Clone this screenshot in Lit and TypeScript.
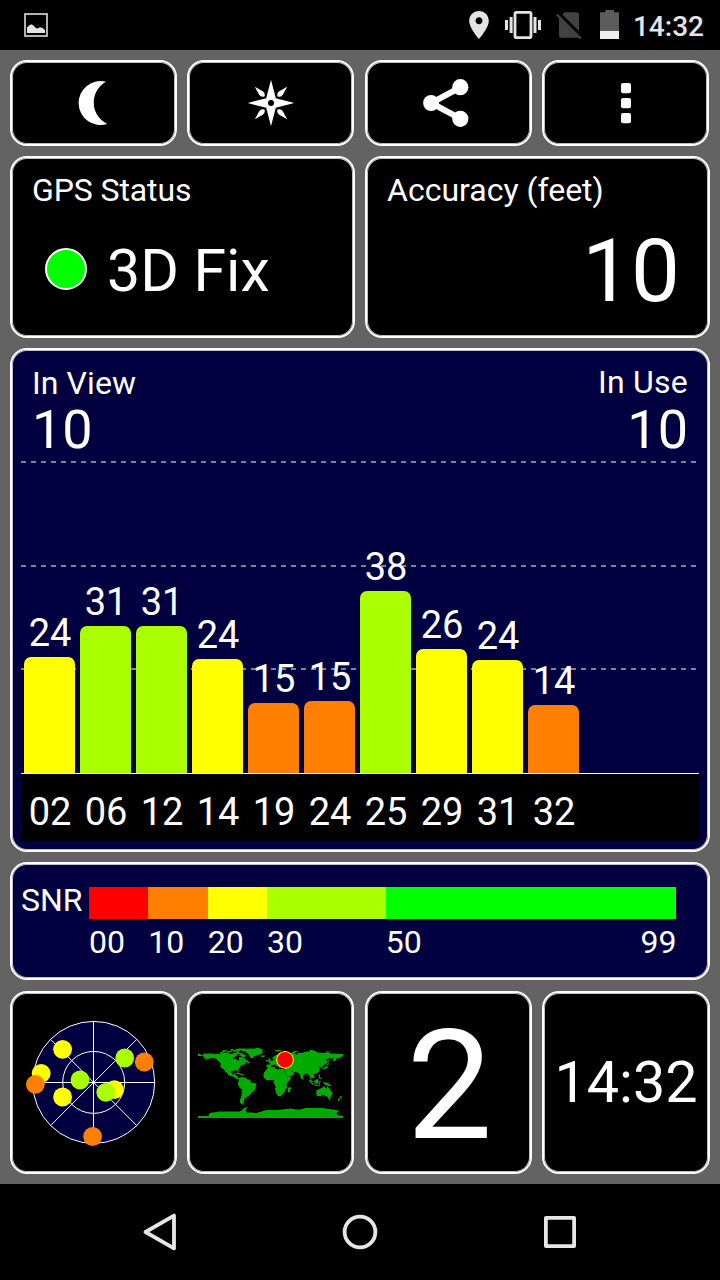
import { LitElement, html, svg, css } from "lit";
import { customElement, property } from "lit/decorators.js";

interface Satellite {
  prn: string;
  snr: number;
  height: number;
  level: string;
}

const satellites: Satellite[] = [
  { prn: "02", snr: 24, height: 116, level: "yellow" },
  { prn: "06", snr: 31, height: 147, level: "lime" },
  { prn: "12", snr: 31, height: 147, level: "lime" },
  { prn: "14", snr: 24, height: 114, level: "yellow" },
  { prn: "19", snr: 15, height: 70, level: "orange" },
  { prn: "24", snr: 15, height: 72, level: "orange" },
  { prn: "25", snr: 38, height: 182, level: "lime" },
  { prn: "29", snr: 26, height: 124, level: "yellow" },
  { prn: "31", snr: 24, height: 113, level: "yellow" },
  { prn: "32", snr: 14, height: 68, level: "orange" },
];

@customElement("status-bar")
class StatusBar extends LitElement {
  static styles = css`
    :host {
      display: flex;
      align-items: center;
      justify-content: space-between;
      height: 50px;
      background: #000;
      color: #e4e4e4;
    }
    svg { display: block; }
    .right { display: flex; align-items: center; padding-right: 16px; }
    .clock { font-size: 28px; line-height: 28px; font-weight: 500; margin-left: 13px; padding-top: 3px; }
    .left { padding-left: 24px; }
  `;
  render() {
    return html`
      <div class="left">
        <svg width="24" height="24" viewBox="0 0 24 24">
          <rect x="1" y="1" width="22" height="22" fill="none" stroke="#c4c6c4" stroke-width="1.8" />
          <path d="M3 20V14.5L5 12.5L7.5 11.3L10 13L12 15.3L14 15.3L16 14.2L18.5 15L21 17V20Z" fill="#e4e4e4" />
        </svg>
      </div>
      <div class="right">
        <svg width="154" height="50" viewBox="466 0 154 50">
          <path transform="translate(462.2 8.2) scale(1.4)" fill="#e4e4e4"
            d="M12 2C8.13 2 5 5.13 5 9c0 5.25 7 13 7 13s7-7.75 7-13c0-3.87-3.13-7-7-7zm0 9.5c-1.38 0-2.5-1.12-2.5-2.5s1.12-2.5 2.5-2.5 2.5 1.12 2.5 2.5-1.12 2.5-2.5 2.5z" />
          <rect x="515" y="12.4" width="16" height="25.2" rx="1.4" fill="none" stroke="#e4e4e4" stroke-width="2.8" />
          <path fill="#e4e4e4" d="M505 20h3v10h-3zM509.6 17h3v16h-3zM533.5 17h3v16h-3zM538 20h3v10h-3z" />
          <path fill="#424242" d="M564.5 12.3H576.5Q579 12.3 579 14.8V31L562.3 14.5ZM559 18.3L578 37.3Q577.5 37.8 576.5 37.8H561.5Q559 37.8 559 35.3Z" />
          <path d="M556.8 14.6L580.8 38.6" stroke="#424242" stroke-width="2.4" />
          <path fill="#5c5c5c" d="M605.3 10h8.7v2.3h5V31h-19V12.3h5.3z" />
          <path fill="#eee" d="M600 31h19v8h-19z" />
        </svg>
        <span class="clock">14:32</span>
      </div>
    `;
  }
}

@customElement("satellite-chart")
class SatelliteChart extends LitElement {
  @property({ attribute: false }) items: Satellite[] = [];

  static styles = css`
    :host { display: flex; flex-direction: column; flex: 1; }
    .plot {
      display: flex;
      align-items: flex-end;
      gap: 5px;
      height: 317px;
      padding-left: 3px;
      border-bottom: 1px solid #fff;
      --dash: repeating-linear-gradient(90deg, #8080a0 0 5px, transparent 5px 10px);
      background: var(--dash) 0 5px / 675px 2px no-repeat,
        var(--dash) 0 109px / 675px 2px no-repeat,
        var(--dash) 0 212px / 675px 2px no-repeat;
    }
    .col { width: 51px; display: flex; flex-direction: column; align-items: center; gap: 5px; }
    .value, .prn { font-size: 38px; line-height: 38px; text-align: center; }
    .value { padding-left: 1px; }
    .bar { width: 51px; border-radius: 7px 7px 0 0; }
    .yellow { background: #ff0; }
    .lime { background: #af0; }
    .orange { background: #ff8000; }
    .axis { display: flex; gap: 5px; height: 48px; padding: 19px 0 0 3px; background: #000; }
    .prn { width: 52px; margin-right: -1px; }
  `;
  render() {
    return html`
      <div class="plot">
        ${this.items.map(
          (s) => html`<div class="col">
            <span class="value">${s.snr}</span>
            <div class="bar ${s.level}" style="height:${s.height}px"></div>
          </div>`
        )}
      </div>
      <div class="axis">${this.items.map((s) => html`<span class="prn">${s.prn}</span>`)}</div>
    `;
  }
}

@customElement("sky-view")
class SkyView extends LitElement {
  static styles = css`
    :host, svg { display: block; }
  `;
  render() {
    const dots: [number, number, string][] = [
      [62.6, 64.3, "#ff0"],
      [41.2, 88.3, "#ff0"],
      [35.4, 99.3, "#ff8000"],
      [62.6, 112, "#ff0"],
      [80, 95, "#af0"],
      [124.7, 73, "#af0"],
      [144.3, 77, "#ff8000"],
      [114.4, 104.6, "#ff0"],
      [105.8, 107.3, "#af0"],
      [92.6, 151.5, "#ff8000"],
    ];
    return html`
      <svg width="163" height="179" viewBox="12 8 163 179">
        <circle cx="93.7" cy="97.4" r="61" fill="#000040" />
        <g fill="none" stroke="#fff">
          <circle cx="93.7" cy="97.4" r="61" stroke-width="1" />
          <circle cx="93.7" cy="97.4" r="31" stroke-width="1" />
          <path d="M93.5 36.5V158.5M32.5 97.5H154.5M50.5 54.3L136.8 140.6M136.8 54.3L50.5 140.6" />
        </g>
        ${dots.map(([x, y, c]) => svg`<circle cx=${x} cy=${y} r="9.4" fill=${c} />`)}
      </svg>
    `;
  }
}

@customElement("world-map")
class WorldMap extends LitElement {
  static styles = css`
    :host, svg { display: block; }
  `;
  render() {
    /* Coastlines are plain longitude/latitude pairs; the group flips latitude upwards. */
    const lands = [
      "-168,66 -166,70 -156,71 -141,70 -128,70 -115,69 -108,69 -95,69 -94,72 -85,70 -82,67 -87,64 -94,61 -93,58 -82,55 -80,51 -78,55 -77,58 -78,62 -70,61 -65,59 -60,55 -56,52 -60,50 -66,50 -60,46 -66,44 -70,43 -74,40 -76,36 -81,31 -80,26 -82,28 -84,30 -90,29 -97,28 -97,22 -95,18 -91,18 -90,21 -87,21 -88,16 -83,15 -83,10 -79,9 -77,8 -83,7 -87,11 -93,14 -100,16 -105,19 -109,26 -114,31 -110,23 -115,30 -117,33 -121,35 -124,40 -124,48 -130,54 -135,59 -146,61 -152,59 -162,55 -157,59 -164,60 -166,64",
      "-180,71 -177,71 -177,69 -170,67 -170,65 -177,66 -180,65",
      "-73,78 -65,82 -50,83 -30,84 -20,82 -20,75 -22,71 -32,68 -40,65 -44,60 -50,62 -54,68 -56,73 -62,76",
      "-90,73 -80,74 -70,71 -62,67 -65,63 -72,64 -77,66 -73,69 -80,71 -88,71",
      "-118,73 -105,73 -102,69 -116,69",
      "-125,74 -119,74 -116,72 -122,71",
      "-92,77 -88,81 -78,83 -64,83 -76,79 -82,76",
      "-108,77 -98,77 -98,75 -108,75",
      "-118,79 -110,79 -110,77 -118,76",
      "-98,82 -92,81 -93,78 -99,79",
      "-58,51 -53,50 -53,47 -58,47",
      "-24,66 -14,66 -14,64 -22,63",
      "-85,22 -80,23 -74,20 -78,20",
      "-74,20 -68,19 -69,17 -74,18",
      "-79,8 -75,11 -71,12 -62,10 -57,6 -51,5 -50,0 -44,-3 -38,-4 -35,-6 -37,-11 -39,-15 -41,-22 -48,-26 -50,-30 -54,-34 -58,-35 -58,-38 -62,-39 -65,-42 -67,-46 -67,-50 -69,-52 -66,-55 -70,-55 -75,-52 -75,-46 -73,-38 -71,-30 -70,-18 -76,-14 -80,-6 -80,-2 -78,2 -78,7",
      "-17,15 -17,21 -13,27 -9,32 -6,36 3,37 10,37 11,34 19,30 22,33 31,31 34,31 34,28 37,21 43,12 51,12 48,5 41,-2 39,-7 41,-15 35,-20 35,-24 32,-28 26,-34 19,-35 15,-28 12,-18 13,-10 9,-2 9,4 4,6 -5,5 -9,5 -13,8",
      "44,-16 48,-13 50,-16 47,-25 44,-24",
      "-9,43 -2,43 -1,47 -4,48 2,51 8,54 8,57 11,57 11,54 20,55 24,58 22,60 29,60 22,61 25,65 21,65 17,61 18,60 15,56 12,56 10,59 6,58 5,62 12,66 20,70 28,71 40,68 40,66 34,67 37,64 44,66 44,68 55,69 60,69 68,68 67,72 73,73 75,72 80,73 87,75 98,76 104,78 113,76 113,74 130,72 140,73 150,71 160,70 170,70 180,69 180,65 177,63 170,60 164,60 162,55 157,51 156,57 163,62 155,59 143,59 135,55 140,53 140,48 132,43 129,41 129,36 126,35 125,39 121,39 118,39 122,37 119,35 122,31 121,28 116,23 109,21 106,19 109,13 106,9 102,12 100,14 99,9 104,1 99,7 97,17 91,22 87,21 80,15 80,10 77,8 74,15 72,21 67,24 58,26 52,27 49,30 51,25 56,26 59,23 55,17 44,13 39,21 35,28 36,36 28,37 27,40 35,42 41,42 37,46 31,46 28,42 24,38 22,37 19,42 13,45 18,40 16,38 10,44 3,42 -1,37 -9,37",
      "-5,58 -2,58 1,52 -5,50 -3,54",
      "-10,55 -6,55 -6,52 -10,52",
      "52,71 56,76 68,77 60,74 57,71",
      "12,78 12,80 25,80 20,77",
      "95,80 105,80 104,78 95,79",
      "138,76 150,76 148,74 138,74",
      "80,9 82,8 81,6 80,6",
      "143,54 144,50 143,46 142,50",
      "141,45 145,43 140,42",
      "140,41 142,38 140,35 135,34 131,32 130,34 136,36",
      "95,5 99,3 106,-4 105,-6 100,-2",
      "105,-6 115,-8 122,-9 114,-9",
      "109,2 117,7 119,3 116,-4 110,-3",
      "119,0 125,1 121,-1 123,-5 120,-5",
      "120,18 122,18 122,14 126,8 122,8 121,13",
      "131,-1 138,-2 147,-6 150,-10 143,-9 138,-8",
      "114,-22 122,-18 129,-14 132,-11 136,-12 136,-15 140,-17 142,-11 146,-18 153,-26 150,-37 144,-39 138,-35 131,-31 124,-34 115,-34",
      "145,-41 148,-41 147,-44",
      "173,-35 178,-38 175,-41 174,-39",
      "172,-41 174,-42 168,-47 167,-45",
      "-180,-86 -155,-86 -150,-78 -130,-75 -100,-74 -75,-74 -66,-66 -58,-63 -62,-68 -62,-76 -35,-78 -10,-71 20,-70 50,-67 70,-70 88,-66 130,-66 160,-70 170,-72 162,-78 168,-84 180,-86 180,-90 -180,-90",
    ];
    return html`
      <svg width="145" height="72" viewBox="-180 -90 360 180" preserveAspectRatio="none">
        <g transform="scale(1 -1)" fill="#00aa00" stroke="#00aa00" stroke-width="1.2" shape-rendering="crispEdges">
          ${lands.map((p) => svg`<polygon points=${p} />`)}
        </g>
        <ellipse cx="36" cy="-55.5" rx="20.8" ry="21" fill="#f00" stroke="#ff0" stroke-width="2.6" />
      </svg>
    `;
  }
}

@customElement("nav-bar")
class NavBar extends LitElement {
  static styles = css`
    :host {
      display: grid;
      grid-template-columns: repeat(3, 200px);
      justify-content: center;
      align-items: center;
      justify-items: center;
      height: 96px;
      background: #000;
    }
    svg { display: block; fill: none; stroke: #e6e6e6; stroke-width: 3.8; stroke-linejoin: round; }
  `;
  render() {
    return html`
      <svg width="40" height="40" viewBox="-20 -20 40 40"><path d="M-14.5 0L14 -16.4V16.4Z" /></svg>
      <svg width="40" height="40" viewBox="-20 -20 40 40"><circle r="15.4" /></svg>
      <svg width="40" height="40" viewBox="-20 -20 40 40"><rect x="-14.1" y="-14.1" width="28.2" height="28.2" /></svg>
    `;
  }
}

@customElement("app-root")
class AppRoot extends LitElement {
  static styles = css`
    :host {
      display: flex;
      flex-direction: column;
      width: 720px;
      height: 1280px;
      overflow: hidden;
      background: #636363;
      color: #fff;
      font-family: Roboto, "Noto Sans", sans-serif;
    }
    main { display: flex; flex-direction: column; gap: 10px; padding: 10px; height: 1114px; }
    .row { display: grid; grid-template-columns: 345px 345px; gap: 10px; }
    .half { display: grid; grid-template-columns: 167px 167px; gap: 10px; }
    .half.wide { grid-template-columns: 167px 168px; }
    .panel {
      box-sizing: border-box;
      border: 2px solid #fff;
      border-radius: 17px;
      box-shadow: inset 0 0 0 1px rgba(255, 255, 255, 0.75);
      background: #000;
    }
    .blue { background: #000040; }
    .tool { display: flex; align-items: center; justify-content: center; height: 86px; }
    .tool svg { display: block; fill: #fff; }
    .info { height: 182px; padding: 16px 28px 0 20px; }
    .title { font-size: 32px; line-height: 32px; white-space: nowrap; }
    .tight { letter-spacing: -0.1px; }
    .fix { display: flex; align-items: flex-start; gap: 20px; margin-top: 35px; padding-left: 13px; }
    .led {
      box-sizing: border-box;
      width: 42px;
      height: 42px;
      margin-top: 7px;
      border: 2px solid #fff;
      border-radius: 50%;
      background: #0f0;
    }
    .fix-text { font-size: 59px; line-height: 59px; white-space: nowrap; }
    .accuracy { margin-top: 21px; font-size: 87px; line-height: 88px; text-align: right; }
    .chart { display: flex; flex-direction: column; height: 504px; padding: 0 9px 9px; }
    .head { display: flex; justify-content: space-between; height: 90px; padding: 16px 11px 0; }
    .head .count { font-size: 54px; line-height: 54px; }
    .view { padding-top: 1px; }
    .view .title { letter-spacing: 0.1px; }
    .view .count { margin-top: 4px; }
    .use { text-align: right; }
    .use .title { letter-spacing: 0.25px; }
    .use .count { margin-top: 5px; }
    .snr { display: flex; height: 118px; padding: 20px 0 0 9px; font-size: 32px; line-height: 32px; }
    .snr-name { width: 68px; }
    .scale { width: 587.4px; padding-top: 3px; }
    .ramp, .ticks { display: grid; grid-template-columns: 10fr 10fr 10fr 20fr 49fr; }
    .ramp { height: 32px; }
    .ticks { margin-top: 7px; }
    .last { display: flex; justify-content: space-between; }
    .s0 { background: #f00; }
    .s1 { background: #ff8000; }
    .s2 { background: #ff0; }
    .s3 { background: #af0; }
    .s4 { background: #0f0; }
    .bottom { margin-top: 1px; }
    .tile { display: flex; flex-direction: column; align-items: center; height: 183px; }
    .map { padding-top: 53px; }
    .digit { padding: 16px 0 0 2px; font-size: 153px; line-height: 153px; }
    .time { padding-top: 61px; font-size: 57.5px; line-height: 58px; white-space: nowrap; }
  `;

  render() {
    return html`
      <status-bar></status-bar>
      <main>
        <div class="row">
          <div class="half">
            <div class="panel tool">
              <svg width="61" height="60" viewBox="-30.5 -30 61 60">
                <path d="M12.5 -21.3A22 22 0 1 0 13.8 21A23.8 23.8 0 0 1 12.5 -21.3Z" />
              </svg>
            </div>
            <div class="panel tool">
              <svg width="61" height="60" viewBox="-31 -30 61 60">
                <path fill-rule="evenodd"
                  d="M0 -23.3L4.8 -4.8L23.3 0L4.8 4.8L0 23.3L-4.8 4.8L-23.3 0L-4.8 -4.8ZM0 -3A3 3 0 1 0 0 3A3 3 0 1 0 0 -3Z" />
                ${[0, 90, 180, 270].map(
                  (a) => svg`<path transform="rotate(${a})" d="M16.2 -16.2L11.8 -8.2Q10.8 -6.3 8.3 -6.2L6.5 -6.5L6.2 -8.3Q6.3 -10.8 8.2 -11.8Z" />`
                )}
              </svg>
            </div>
          </div>
          <div class="half">
            <div class="panel tool">
              <svg width="61" height="60" viewBox="-30.5 -30 61 60">
                <path d="M11.8 -15.7L-17.3 0L11.8 15.7" fill="none" stroke="#fff" stroke-width="6" />
                <circle cx="-17.4" cy="0" r="8" />
                <circle cx="11.8" cy="-15.8" r="8.1" />
                <circle cx="11.8" cy="15.8" r="8.1" />
              </svg>
            </div>
            <div class="panel tool">
              <svg width="61" height="60" viewBox="-30.5 -30 61 60">
                <rect x="-4.5" y="-20" width="10" height="10.3" rx="2" />
                <rect x="-4.5" y="-5" width="10" height="10.3" rx="2" />
                <rect x="-4.5" y="10" width="10" height="10.3" rx="2" />
              </svg>
            </div>
          </div>
        </div>

        <div class="row">
          <div class="panel info">
            <div class="title tight">GPS Status</div>
            <div class="fix"><span class="led"></span><span class="fix-text">3D Fix</span></div>
          </div>
          <div class="panel info">
            <div class="title">Accuracy (feet)</div>
            <div class="accuracy">10</div>
          </div>
        </div>

        <div class="panel blue chart">
          <div class="head">
            <div class="view">
              <div class="title">In View</div>
              <div class="count">10</div>
            </div>
            <div class="use">
              <div class="title">In Use</div>
              <div class="count">10</div>
            </div>
          </div>
          <satellite-chart .items=${satellites}></satellite-chart>
        </div>

        <div class="panel blue snr">
          <span class="snr-name">SNR</span>
          <div class="scale">
            <div class="ramp">
              ${[0, 1, 2, 3, 4].map((i) => html`<div class="s${i}"></div>`)}
            </div>
            <div class="ticks">
              <span>00</span><span>10</span><span>20</span><span>30</span>
              <div class="last"><span>50</span><span>99</span></div>
            </div>
          </div>
        </div>

        <div class="row bottom">
          <div class="half">
            <div class="panel tile"><sky-view></sky-view></div>
            <div class="panel tile map"><world-map></world-map></div>
          </div>
          <div class="half wide">
            <div class="panel tile digit">2</div>
            <div class="panel tile time">14:32</div>
          </div>
        </div>
      </main>
      <nav-bar></nav-bar>
    `;
  }
}
